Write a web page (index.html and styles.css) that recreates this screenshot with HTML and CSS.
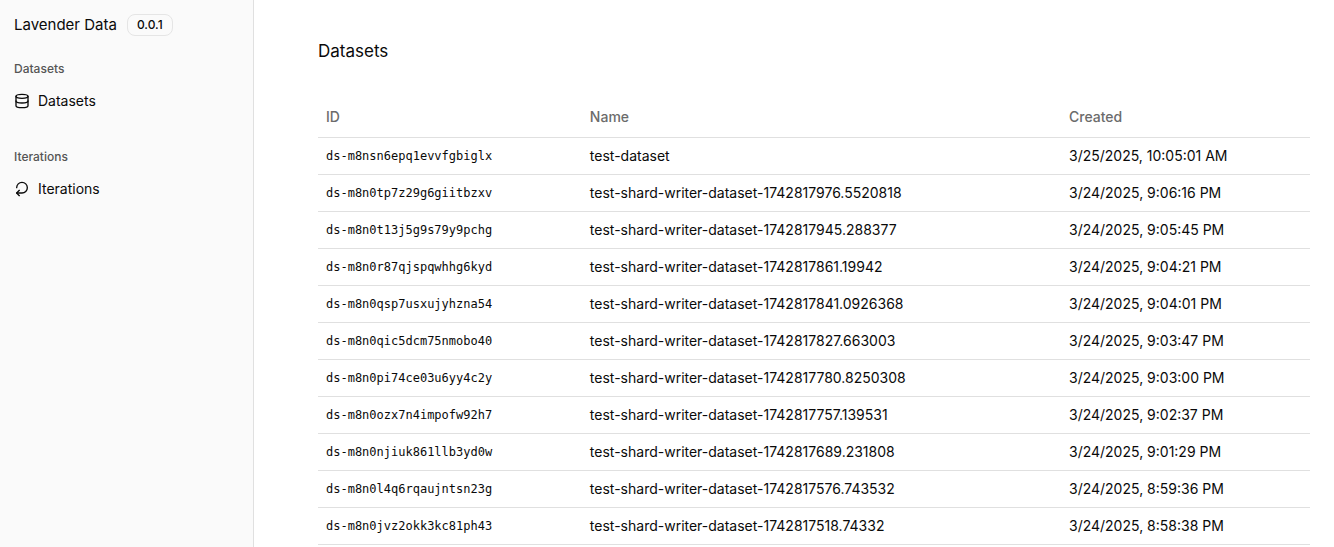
FILE: index.html
```
<!DOCTYPE html>
<html lang="en">
<head>
<meta charset="utf-8">
<title>Lavender Data</title>
<link rel="stylesheet" href="styles.css">
</head>
<body>
<div class="app">
  <aside class="sidebar">
    <header class="brand"><span>Lavender Data</span><span class="badge">0.0.1</span></header>
    <nav>
      <section class="group">
        <h2 class="group-label">Datasets</h2>
        <a class="nav-link" href="#datasets">
          <svg class="icon" viewBox="0 0 24 24" aria-hidden="true"><ellipse cx="12" cy="5" rx="9" ry="3"/><path d="M3 5v14a9 3 0 0 0 18 0V5"/><path d="M3 12a9 3 0 0 0 18 0"/></svg>
          <span>Datasets</span>
        </a>
      </section>
      <section class="group">
        <h2 class="group-label">Iterations</h2>
        <a class="nav-link" href="#iterations">
          <svg class="icon" viewBox="0 0 24 24" aria-hidden="true"><path d="M4 10c0-4.4 3.6-8 8-8s8 3.6 8 8-3.6 8-8 8H4"/><path d="m8 22-4-4 4-4"/></svg>
          <span>Iterations</span>
        </a>
      </section>
    </nav>
  </aside>
  <main class="content">
    <h1 class="title">Datasets</h1>
    <table class="table">
      <thead><tr><th class="col-id">ID</th><th class="col-name">Name</th><th>Created</th></tr></thead>
      <tbody>
        <tr><td class="mono">ds-m8nsn6epq1evvfgbiglx</td><td>test-dataset</td><td>3/25/2025, 10:05:01 AM</td></tr>
        <tr><td class="mono">ds-m8n0tp7z29g6giitbzxv</td><td>test-shard-writer-dataset-1742817976.5520818</td><td>3/24/2025, 9:06:16 PM</td></tr>
        <tr><td class="mono">ds-m8n0t13j5g9s79y9pchg</td><td>test-shard-writer-dataset-1742817945.288377</td><td>3/24/2025, 9:05:45 PM</td></tr>
        <tr><td class="mono">ds-m8n0r87qjspqwhhg6kyd</td><td>test-shard-writer-dataset-1742817861.19942</td><td>3/24/2025, 9:04:21 PM</td></tr>
        <tr><td class="mono">ds-m8n0qsp7usxujyhzna54</td><td>test-shard-writer-dataset-1742817841.0926368</td><td>3/24/2025, 9:04:01 PM</td></tr>
        <tr><td class="mono">ds-m8n0qic5dcm75nmobo40</td><td>test-shard-writer-dataset-1742817827.663003</td><td>3/24/2025, 9:03:47 PM</td></tr>
        <tr><td class="mono">ds-m8n0pi74ce03u6yy4c2y</td><td>test-shard-writer-dataset-1742817780.8250308</td><td>3/24/2025, 9:03:00 PM</td></tr>
        <tr><td class="mono">ds-m8n0ozx7n4impofw92h7</td><td>test-shard-writer-dataset-1742817757.139531</td><td>3/24/2025, 9:02:37 PM</td></tr>
        <tr><td class="mono">ds-m8n0njiuk861llb3yd0w</td><td>test-shard-writer-dataset-1742817689.231808</td><td>3/24/2025, 9:01:29 PM</td></tr>
        <tr><td class="mono">ds-m8n0l4q6rqaujntsn23g</td><td>test-shard-writer-dataset-1742817576.743532</td><td>3/24/2025, 8:59:36 PM</td></tr>
        <tr><td class="mono">ds-m8n0jvz2okk3kc81ph43</td><td>test-shard-writer-dataset-1742817518.74332</td><td>3/24/2025, 8:58:38 PM</td></tr>
      </tbody>
    </table>
  </main>
</div>
</body>
</html>
```
FILE: styles.css
```
* { box-sizing: border-box; }
body {
  margin: 0;
  background: #fff;
  color: #0a0a0a;
  font: 14px/20px Inter, "Liberation Sans", sans-serif;
}
.app { display: flex; min-height: 100vh; }
.sidebar {
  flex: none;
  width: 254px;
  padding: 14px 8px 0 14px;
  background: #fafafa;
  border-right: 1px solid #e0e0e0;
}
.brand {
  display: flex;
  align-items: center;
  gap: 10px;
  margin-bottom: 17px;
  font-size: 15px;
}
.badge {
  padding: 2px 9px;
  border: 1px solid #e5e5e5;
  border-radius: 8px;
  font-size: 12px;
  font-weight: 500;
  line-height: 16px;
}
.group { margin-bottom: 24px; }
.group-label {
  margin: 0;
  color: #555;
  font-size: 12px;
  font-weight: 500;
  line-height: 32px;
}
.nav-link {
  display: flex;
  align-items: center;
  gap: 8px;
  height: 32px;
  color: inherit;
  text-decoration: none;
}
.icon {
  width: 16px;
  height: 16px;
  fill: none;
  stroke: currentColor;
  stroke-width: 2;
  stroke-linecap: round;
  stroke-linejoin: round;
}
.content { flex: 1; min-width: 0; padding: 37px 24px 0 64px; }
.title {
  margin: 0 0 31px;
  font-size: 17px;
  font-weight: 400;
  line-height: 28px;
}
.table {
  width: 100%;
  border-collapse: separate;
  border-spacing: 0;
  table-layout: fixed;
}
.table th, .table td {
  padding: 8px;
  border-bottom: 1px solid #e0e0e0;
  text-align: left;
  vertical-align: middle;
  white-space: nowrap;
}
.table th {
  height: 42px;
  color: #6b6b6b;
  font-weight: 500;
}
.col-id { width: 26.6%; }
.col-name { width: 48.3%; }
.table .mono {
  font-family: "DejaVu Sans Mono", monospace;
  font-size: 12px;
}
```
